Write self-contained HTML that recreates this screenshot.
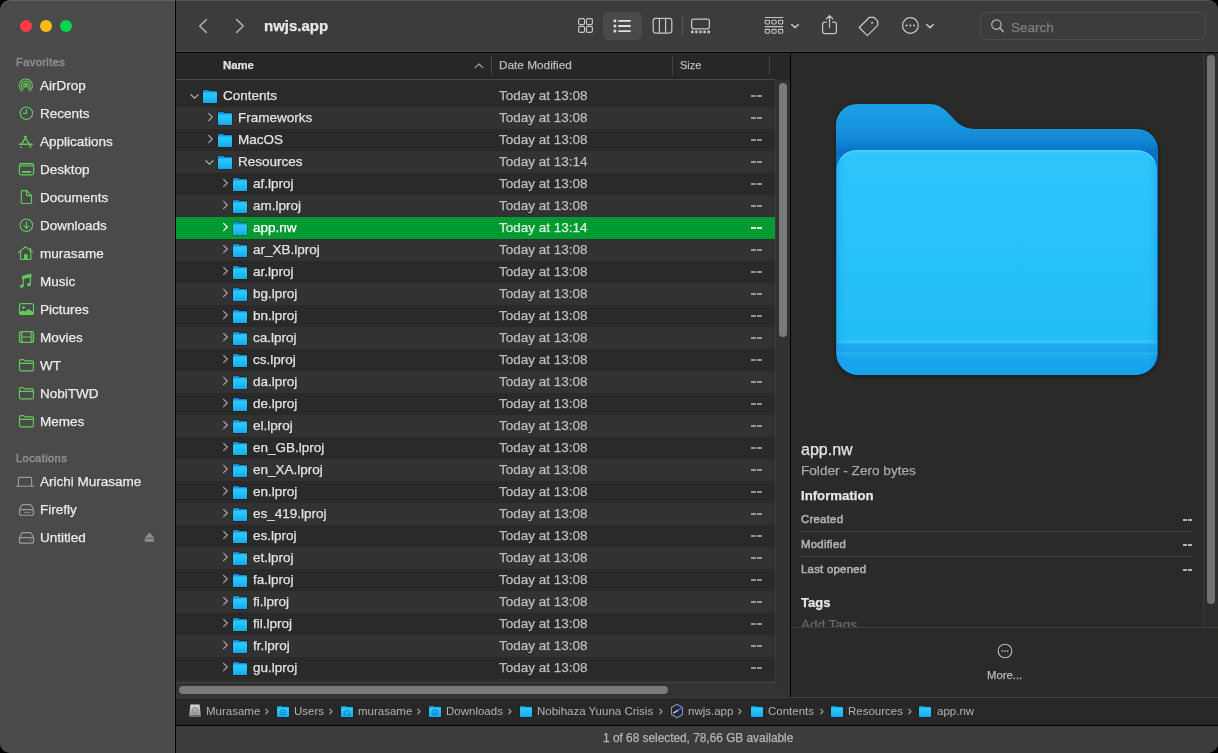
<!DOCTYPE html>
<html><head><meta charset="utf-8">
<style>
*{margin:0;padding:0;box-sizing:border-box}
html,body{width:1218px;height:753px;background:#000;overflow:hidden}
body{font-family:"Liberation Sans",sans-serif;-webkit-font-smoothing:antialiased}
.a{-webkit-text-stroke:0.25px currentColor}
#win{will-change:transform;position:absolute;left:0;top:0;width:1218px;height:753px;border-radius:10px;overflow:hidden;background:#2a2a2a}
.a{position:absolute;white-space:nowrap}
#side{left:0;top:0;width:175px;height:753px;background:#4a4a4a;border-right:1px solid #515151}
#sideb{left:175px;top:0;width:1px;height:753px;background:#000}
#tb{left:176px;top:0;width:1042px;height:52px;background:#3c3c3c;border-bottom:1px solid #434343}
#tbb{left:176px;top:52px;width:1042px;height:1px;background:#000}
#topl{left:0;top:0;width:1218px;height:1px;background:#626262}
.tl{position:absolute;top:20px;width:12px;height:12px;border-radius:6px}
.sh{font-size:11px;letter-spacing:0.45px;color:#8e8e8e;left:16px;-webkit-text-stroke:0.55px currentColor}
.si{font-size:13.5px;color:#ebebeb;left:40px}
.ic{position:absolute}
#hdr{left:176px;top:53px;width:614px;height:26px;background:#272727;border-top:1px solid #2c2c2c}
#hdrl{left:176px;top:79px;width:599px;height:1px;background:#484848}
.hs{position:absolute;top:56px;width:1px;height:19px;background:#444}
.row{position:absolute;left:176px;width:599px;height:22px}
.row .n{position:absolute;font-size:13.5px;color:#e2e2e2;top:3px}
.row .d{position:absolute;left:323px;font-size:13.5px;color:#bcbcbc;top:3px}
.row .z{position:absolute;left:575px;font-size:13.5px;color:#c4c4c4;top:3px}
.ev{background:#2a2a2a}.od{background:#323232}
.sel{background:#009b30}
.sel .n,.sel .d,.sel .z{color:#fff}
.rt{font-size:13.5px}
.pl{left:801px;font-size:11.4px;letter-spacing:0.25px;color:#b0b0b0;-webkit-text-stroke:0.55px currentColor}
.pv{left:1182px;font-size:13px;color:#dcdcdc}
.pt{position:absolute;top:705px;font-size:11.5px;color:#b2b2b2;white-space:nowrap}
</style></head><body>
<svg width="0" height="0" style="position:absolute"><defs><linearGradient id="sfg" x1="0" y1="0" x2="0" y2="1"><stop offset="0" stop-color="#2ecbfd"/><stop offset="0.5" stop-color="#22bdf7"/><stop offset="1" stop-color="#14a8ee"/></linearGradient></defs></svg>
<div id="win">
<div class="a" id="side"></div>
<div class="a" id="sideb"></div>
<div class="a" id="tb"></div>
<div class="a" id="tbb"></div>

<div class="tl" style="left:20px;background:#fd3b47"></div>
<div class="tl" style="left:40px;background:#fdbd14"></div>
<div class="tl" style="left:60px;background:#00d54c"></div>

<!-- sidebar text -->
<div class="a sh" style="top:56px">Favorites</div>
<div class="a si" style="top:78px">AirDrop</div>
<div class="a si" style="top:106px">Recents</div>
<div class="a si" style="top:134px">Applications</div>
<div class="a si" style="top:162px">Desktop</div>
<div class="a si" style="top:190px">Documents</div>
<div class="a si" style="top:218px">Downloads</div>
<div class="a si" style="top:246px">murasame</div>
<div class="a si" style="top:274px">Music</div>
<div class="a si" style="top:302px">Pictures</div>
<div class="a si" style="top:330px">Movies</div>
<div class="a si" style="top:358px">WT</div>
<div class="a si" style="top:386px">NobiTWD</div>
<div class="a si" style="top:414px">Memes</div>
<div class="a sh" style="top:452px">Locations</div>
<div class="a si" style="top:474px">Arichi Murasame</div>
<div class="a si" style="top:502px">Firefly</div>
<div class="a si" style="top:530px">Untitled</div>

<!-- header -->
<div class="a" id="hdr"></div>
<div class="a" id="hdrl"></div>
<div class="a" style="left:223px;top:59px;font-size:11.3px;font-weight:bold;color:#e2e2e2">Name</div>
<div class="a" style="left:499px;top:58px;font-size:11.8px;color:#bababa">Date Modified</div>
<div class="a" style="left:680px;top:59px;font-size:11px;color:#bababa">Size</div>
<svg class="ic" style="left:473px;top:61px" width="12" height="9" viewBox="0 0 12 9"><path d="M2.2 6.6 L6 3 L9.8 6.6" fill="none" stroke="#a4a4a4" stroke-width="1.2" stroke-linecap="round" stroke-linejoin="round"/></svg>
<div class="hs" style="left:491px"></div>
<div class="hs" style="left:672px"></div>
<div class="hs" style="left:769px"></div>


<!-- list borders & scrollbars -->
<div class="a" style="left:775px;top:80px;width:1px;height:603px;background:#3d3d3d"></div>
<div class="a" style="left:776px;top:80px;width:14px;height:603px;background:#323232"></div>
<div class="a" style="left:779px;top:83px;width:8px;height:254px;border-radius:4px;background:#7a7a7a"></div>
<div class="a" style="left:176px;top:679px;width:599px;height:3px;background:#2e2e2e"></div><div class="a" style="left:176px;top:682px;width:600px;height:1px;background:#424242"></div>
<div class="a" style="left:176px;top:683px;width:614px;height:14px;background:#333333"></div>
<div class="a" style="left:179px;top:686px;width:489px;height:8px;border-radius:4px;background:#7a7a7a"></div>
<div class="a" style="left:790px;top:53px;width:1px;height:644px;background:#000"></div>

<!-- preview pane -->
<div class="a" style="left:791px;top:53px;width:427px;height:644px;background:#2a2a28"></div>
<div class="a" style="left:1203px;top:53px;width:1px;height:574px;background:#3a3a3a"></div>
<div class="a" style="left:1204px;top:53px;width:14px;height:574px;background:#2d2d2d"></div>
<div class="a" style="left:1207px;top:55px;width:8px;height:549px;border-radius:4px;background:#717171"></div>
<svg class="ic" style="left:826px;top:94px" width="342" height="292" viewBox="0 0 342 292">
<defs>
<linearGradient id="bk" gradientUnits="userSpaceOnUse" x1="0" y1="10" x2="0" y2="57"><stop offset="0" stop-color="#1c9fe6"/><stop offset="0.45" stop-color="#1896de"/><stop offset="0.8" stop-color="#1186d6"/><stop offset="1" stop-color="#0a70c6"/></linearGradient>
<linearGradient id="fr" gradientUnits="userSpaceOnUse" x1="0" y1="56" x2="0" y2="281">
<stop offset="0" stop-color="#3acbfd"/><stop offset="0.02" stop-color="#2ec5fb"/><stop offset="0.5" stop-color="#28c1f9"/><stop offset="0.84" stop-color="#23bdf7"/>
<stop offset="0.852" stop-color="#36c6fa"/><stop offset="0.866" stop-color="#1faaee"/><stop offset="0.895" stop-color="#1ca6ec"/><stop offset="0.905" stop-color="#26b4f2"/><stop offset="0.918" stop-color="#1aa8ee"/><stop offset="1" stop-color="#16a2ea"/></linearGradient>
<linearGradient id="frs" x1="0" y1="0" x2="1" y2="0"><stop offset="0" stop-color="#0a80c8" stop-opacity="0.2"/><stop offset="0.03" stop-color="#0a80c8" stop-opacity="0"/><stop offset="0.97" stop-color="#0a80c8" stop-opacity="0"/><stop offset="1" stop-color="#0a80c8" stop-opacity="0.2"/></linearGradient>
<filter id="sh" x="-10%" y="-10%" width="120%" height="120%"><feDropShadow dx="0" dy="1" stdDeviation="2.2" flood-color="#000" flood-opacity="0.5"/></filter>
</defs>
<g filter="url(#sh)">
<path d="M10 31 A21 21 0 0 1 31 10 H103 C112 10 118 14 125 22 C132 30 138 35 149 35 H311 A21 21 0 0 1 332 56 V259 A22 22 0 0 1 310 281 H32 A22 22 0 0 1 10 259 Z" fill="url(#bk)"/>
<path d="M10.5 76 A20 20 0 0 1 30.5 56 H311 A20 20 0 0 1 331 76 V259 A22 22 0 0 1 309 281 H32.5 A22 22 0 0 1 10.5 259 Z" fill="url(#fr)"/>
<path d="M10.5 76 A20 20 0 0 1 30.5 56 H311 A20 20 0 0 1 331 76 V259 A22 22 0 0 1 309 281 H32.5 A22 22 0 0 1 10.5 259 Z" fill="url(#frs)"/>
<path d="M14 66 A20 20 0 0 1 30.5 56.6 H311 A20 20 0 0 1 327.5 66" fill="none" stroke="#6ad8ff" stroke-opacity="0.5" stroke-width="1.1"/>
</g>
</svg>
<div class="a" style="left:801px;top:441px;font-size:16px;color:#e4e4e4">app.nw</div>
<div class="a" style="left:801px;top:463px;font-size:13.6px;color:#a9a9a9">Folder - Zero bytes</div>
<div class="a" style="left:801px;top:488px;font-size:13.2px;font-weight:bold;color:#e6e6e6">Information</div>
<div class="a pl" style="top:513px">Created</div>
<div class="a" style="left:1183px;top:519px;width:4px;height:2px;background:rgba(215,215,215,0.8)"></div><div class="a" style="left:1188px;top:519px;width:4px;height:2px;background:rgba(215,215,215,0.8)"></div>
<div class="a" style="left:801px;top:531px;width:391px;height:1px;background:#424242"></div>
<div class="a pl" style="top:538px">Modified</div>
<div class="a" style="left:1183px;top:544px;width:4px;height:2px;background:rgba(215,215,215,0.8)"></div><div class="a" style="left:1188px;top:544px;width:4px;height:2px;background:rgba(215,215,215,0.8)"></div>
<div class="a" style="left:801px;top:556px;width:391px;height:1px;background:#424242"></div>
<div class="a pl" style="top:563px">Last opened</div>
<div class="a" style="left:1183px;top:569px;width:4px;height:2px;background:rgba(215,215,215,0.8)"></div><div class="a" style="left:1188px;top:569px;width:4px;height:2px;background:rgba(215,215,215,0.8)"></div>
<div class="a" style="left:801px;top:595px;font-size:13px;font-weight:bold;color:#e6e6e6">Tags</div>
<div class="a" style="left:791px;top:616px;width:412px;height:11px;overflow:hidden"><div class="a" style="left:10px;top:1px;font-size:13.5px;color:#6a6a6a">Add Tags</div></div>
<div class="a" style="left:791px;top:627px;width:427px;height:1px;background:#3e3e3e"></div>
<svg class="ic" style="left:996px;top:642px" width="18" height="18" viewBox="0 0 18 18"><circle cx="9" cy="9" r="6.8" fill="none" stroke="#bdbdbd" stroke-width="1.1"/><rect x="5.6" y="8.3" width="1.5" height="1.5" fill="#bdbdbd"/><rect x="8.25" y="8.3" width="1.5" height="1.5" fill="#bdbdbd"/><rect x="10.9" y="8.3" width="1.5" height="1.5" fill="#bdbdbd"/></svg>
<div class="a" style="left:987px;top:669px;font-size:11.3px;color:#b9b9b9">More...</div>

<!-- path bar -->
<div class="a" style="left:176px;top:697px;width:1042px;height:1px;background:#3c3c3c"></div>
<div class="a" style="left:176px;top:698px;width:1042px;height:27px;background:#282828"></div>
<div class="a" style="left:176px;top:725px;width:1042px;height:1px;background:#000"></div>
<svg class="ic" style="left:188px;top:703px" width="14" height="15" viewBox="0 0 14 15">
<defs><linearGradient id="dv" x1="0" y1="0" x2="0" y2="1"><stop offset="0" stop-color="#d8dcdf"/><stop offset="1" stop-color="#8a9096"/></linearGradient></defs>
<path d="M2.4 1.5 H11.6 L12.8 12 V13.6 H1.2 V12 Z" fill="url(#dv)"/><rect x="1.2" y="12" width="11.6" height="1.6" fill="#6c7075"/>
<circle cx="7" cy="7.2" r="2.8" fill="none" stroke="#7d8388" stroke-width="0.9"/><circle cx="7" cy="7.2" r="0.8" fill="#7d8388"/></svg>
<div class="pt" style="left:206px">Murasame</div>
<svg class="ic" style="left:264px;top:707px" width="6" height="9" viewBox="0 0 6 9"><path d="M1.8 2.2 L4 4.5 L1.8 6.8" fill="none" stroke="#a0a0a0" stroke-width="1.2" stroke-linecap="round" stroke-linejoin="round"/></svg>
<svg class="ic" style="left:276px;top:705px" width="14" height="13" viewBox="-1 -1 14 13">
<path d="M0 0.9 Q0 0 0.9 0 H4.4 Q4.9 0 5.2 0.4 L5.6 0.8 H11.1 Q12 0.8 12 1.7 V10.1 Q12 11 11.1 11 H0.9 Q0 11 0 10.1 Z" fill="none" stroke="#000" stroke-opacity="0.3" stroke-width="1"/>
<path d="M0 0.9 Q0 0 0.9 0 H4.4 Q4.9 0 5.2 0.4 L5.6 0.8 H11.1 Q12 0.8 12 1.7 V10.1 Q12 11 11.1 11 H0.9 Q0 11 0 10.1 Z" fill="#1690dc"/>
<path d="M0 2.6 Q0 1.6 1 1.6 H11 Q12 1.6 12 2.6 V10.1 Q12 11 11.1 11 H0.9 Q0 11 0 10.1 Z" fill="url(#sfg)"/><g transform="translate(-0.5 -1.2)"><circle cx="6.5" cy="7.6" r="2.6" fill="none" stroke="#0b7ac4" stroke-width="0.9"/><circle cx="5.7" cy="7.6" r="0.6" fill="#0b7ac4"/><circle cx="7.3" cy="7.6" r="0.6" fill="#0b7ac4"/></g></svg>
<div class="pt" style="left:294px">Users</div>
<svg class="ic" style="left:328px;top:707px" width="6" height="9" viewBox="0 0 6 9"><path d="M1.8 2.2 L4 4.5 L1.8 6.8" fill="none" stroke="#a0a0a0" stroke-width="1.2" stroke-linecap="round" stroke-linejoin="round"/></svg>
<svg class="ic" style="left:340px;top:705px" width="14" height="13" viewBox="-1 -1 14 13">
<path d="M0 0.9 Q0 0 0.9 0 H4.4 Q4.9 0 5.2 0.4 L5.6 0.8 H11.1 Q12 0.8 12 1.7 V10.1 Q12 11 11.1 11 H0.9 Q0 11 0 10.1 Z" fill="none" stroke="#000" stroke-opacity="0.3" stroke-width="1"/>
<path d="M0 0.9 Q0 0 0.9 0 H4.4 Q4.9 0 5.2 0.4 L5.6 0.8 H11.1 Q12 0.8 12 1.7 V10.1 Q12 11 11.1 11 H0.9 Q0 11 0 10.1 Z" fill="#1690dc"/>
<path d="M0 2.6 Q0 1.6 1 1.6 H11 Q12 1.6 12 2.6 V10.1 Q12 11 11.1 11 H0.9 Q0 11 0 10.1 Z" fill="url(#sfg)"/><g transform="translate(-0.5 -1.2)"><path d="M6.5 5.2 L9.3 7.6 V10.2 H3.7 V7.6 Z" fill="none" stroke="#0b7ac4" stroke-width="0.9"/></g></svg>
<div class="pt" style="left:358px">murasame</div>
<svg class="ic" style="left:416px;top:707px" width="6" height="9" viewBox="0 0 6 9"><path d="M1.8 2.2 L4 4.5 L1.8 6.8" fill="none" stroke="#a0a0a0" stroke-width="1.2" stroke-linecap="round" stroke-linejoin="round"/></svg>
<svg class="ic" style="left:428px;top:705px" width="14" height="13" viewBox="-1 -1 14 13">
<path d="M0 0.9 Q0 0 0.9 0 H4.4 Q4.9 0 5.2 0.4 L5.6 0.8 H11.1 Q12 0.8 12 1.7 V10.1 Q12 11 11.1 11 H0.9 Q0 11 0 10.1 Z" fill="none" stroke="#000" stroke-opacity="0.3" stroke-width="1"/>
<path d="M0 0.9 Q0 0 0.9 0 H4.4 Q4.9 0 5.2 0.4 L5.6 0.8 H11.1 Q12 0.8 12 1.7 V10.1 Q12 11 11.1 11 H0.9 Q0 11 0 10.1 Z" fill="#1690dc"/>
<path d="M0 2.6 Q0 1.6 1 1.6 H11 Q12 1.6 12 2.6 V10.1 Q12 11 11.1 11 H0.9 Q0 11 0 10.1 Z" fill="url(#sfg)"/><g transform="translate(-0.5 -1.2)"><circle cx="6.5" cy="7.6" r="2.9" fill="none" stroke="#0b7ac4" stroke-width="0.9"/><path d="M6.5 5.8 V9.2 M5.2 8 L6.5 9.2 L7.8 8" fill="none" stroke="#0b7ac4" stroke-width="0.8"/></g></svg>
<div class="pt" style="left:446px">Downloads</div>
<svg class="ic" style="left:507px;top:707px" width="6" height="9" viewBox="0 0 6 9"><path d="M1.8 2.2 L4 4.5 L1.8 6.8" fill="none" stroke="#a0a0a0" stroke-width="1.2" stroke-linecap="round" stroke-linejoin="round"/></svg>
<svg class="ic" style="left:519px;top:705px" width="14" height="13" viewBox="-1 -1 14 13">
<path d="M0 0.9 Q0 0 0.9 0 H4.4 Q4.9 0 5.2 0.4 L5.6 0.8 H11.1 Q12 0.8 12 1.7 V10.1 Q12 11 11.1 11 H0.9 Q0 11 0 10.1 Z" fill="none" stroke="#000" stroke-opacity="0.3" stroke-width="1"/>
<path d="M0 0.9 Q0 0 0.9 0 H4.4 Q4.9 0 5.2 0.4 L5.6 0.8 H11.1 Q12 0.8 12 1.7 V10.1 Q12 11 11.1 11 H0.9 Q0 11 0 10.1 Z" fill="#1690dc"/>
<path d="M0 2.6 Q0 1.6 1 1.6 H11 Q12 1.6 12 2.6 V10.1 Q12 11 11.1 11 H0.9 Q0 11 0 10.1 Z" fill="url(#sfg)"/><g transform="translate(-0.5 -1.2)"></g></svg>
<div class="pt" style="left:537px">Nobihaza Yuuna Crisis</div>
<svg class="ic" style="left:658px;top:707px" width="6" height="9" viewBox="0 0 6 9"><path d="M1.8 2.2 L4 4.5 L1.8 6.8" fill="none" stroke="#a0a0a0" stroke-width="1.2" stroke-linecap="round" stroke-linejoin="round"/></svg>
<svg class="ic" style="left:670px;top:703px" width="15" height="16" viewBox="0 0 15 16">
<path d="M7 1.3 L12.5 4.4 V11.6 L7 14.7 L1.5 11.6 V4.4 Z" fill="#1f2538" stroke="#8d8f9c" stroke-width="1.1" stroke-linejoin="round"/>
<path d="M11.2 5.3 L7.1 7.9" stroke="#3f52ff" stroke-width="1.9" stroke-linecap="round"/><path d="M7.1 7.9 L3.8 9.9" stroke="#c8c8c8" stroke-width="1.5" stroke-linecap="round"/></svg>
<div class="pt" style="left:688px">nwjs.app</div>
<svg class="ic" style="left:737px;top:707px" width="6" height="9" viewBox="0 0 6 9"><path d="M1.8 2.2 L4 4.5 L1.8 6.8" fill="none" stroke="#a0a0a0" stroke-width="1.2" stroke-linecap="round" stroke-linejoin="round"/></svg>
<svg class="ic" style="left:750px;top:705px" width="14" height="13" viewBox="-1 -1 14 13">
<path d="M0 0.9 Q0 0 0.9 0 H4.4 Q4.9 0 5.2 0.4 L5.6 0.8 H11.1 Q12 0.8 12 1.7 V10.1 Q12 11 11.1 11 H0.9 Q0 11 0 10.1 Z" fill="none" stroke="#000" stroke-opacity="0.3" stroke-width="1"/>
<path d="M0 0.9 Q0 0 0.9 0 H4.4 Q4.9 0 5.2 0.4 L5.6 0.8 H11.1 Q12 0.8 12 1.7 V10.1 Q12 11 11.1 11 H0.9 Q0 11 0 10.1 Z" fill="#1690dc"/>
<path d="M0 2.6 Q0 1.6 1 1.6 H11 Q12 1.6 12 2.6 V10.1 Q12 11 11.1 11 H0.9 Q0 11 0 10.1 Z" fill="url(#sfg)"/><g transform="translate(-0.5 -1.2)"></g></svg>
<div class="pt" style="left:768px">Contents</div>
<svg class="ic" style="left:819px;top:707px" width="6" height="9" viewBox="0 0 6 9"><path d="M1.8 2.2 L4 4.5 L1.8 6.8" fill="none" stroke="#a0a0a0" stroke-width="1.2" stroke-linecap="round" stroke-linejoin="round"/></svg>
<svg class="ic" style="left:830px;top:705px" width="14" height="13" viewBox="-1 -1 14 13">
<path d="M0 0.9 Q0 0 0.9 0 H4.4 Q4.9 0 5.2 0.4 L5.6 0.8 H11.1 Q12 0.8 12 1.7 V10.1 Q12 11 11.1 11 H0.9 Q0 11 0 10.1 Z" fill="none" stroke="#000" stroke-opacity="0.3" stroke-width="1"/>
<path d="M0 0.9 Q0 0 0.9 0 H4.4 Q4.9 0 5.2 0.4 L5.6 0.8 H11.1 Q12 0.8 12 1.7 V10.1 Q12 11 11.1 11 H0.9 Q0 11 0 10.1 Z" fill="#1690dc"/>
<path d="M0 2.6 Q0 1.6 1 1.6 H11 Q12 1.6 12 2.6 V10.1 Q12 11 11.1 11 H0.9 Q0 11 0 10.1 Z" fill="url(#sfg)"/><g transform="translate(-0.5 -1.2)"></g></svg>
<div class="pt" style="left:848px">Resources</div>
<svg class="ic" style="left:907px;top:707px" width="6" height="9" viewBox="0 0 6 9"><path d="M1.8 2.2 L4 4.5 L1.8 6.8" fill="none" stroke="#a0a0a0" stroke-width="1.2" stroke-linecap="round" stroke-linejoin="round"/></svg>
<svg class="ic" style="left:918px;top:705px" width="14" height="13" viewBox="-1 -1 14 13">
<path d="M0 0.9 Q0 0 0.9 0 H4.4 Q4.9 0 5.2 0.4 L5.6 0.8 H11.1 Q12 0.8 12 1.7 V10.1 Q12 11 11.1 11 H0.9 Q0 11 0 10.1 Z" fill="none" stroke="#000" stroke-opacity="0.3" stroke-width="1"/>
<path d="M0 0.9 Q0 0 0.9 0 H4.4 Q4.9 0 5.2 0.4 L5.6 0.8 H11.1 Q12 0.8 12 1.7 V10.1 Q12 11 11.1 11 H0.9 Q0 11 0 10.1 Z" fill="#1690dc"/>
<path d="M0 2.6 Q0 1.6 1 1.6 H11 Q12 1.6 12 2.6 V10.1 Q12 11 11.1 11 H0.9 Q0 11 0 10.1 Z" fill="url(#sfg)"/><g transform="translate(-0.5 -1.2)"></g></svg>
<div class="pt" style="left:937px">app.nw</div>

<!-- status bar -->
<div class="a" style="left:176px;top:726px;width:1042px;height:27px;background:#3c3c3c"></div>
<div class="a" style="left:603px;top:731px;font-size:11.85px;color:#b4b4b4">1 of 68 selected, 78,66 GB available</div>

<!-- toolbar -->
<svg class="ic" style="left:196px;top:17px" width="14" height="18" viewBox="0 0 14 18"><path d="M10.3 2.6 L3.7 9 L10.3 15.4" fill="none" stroke="#ababab" stroke-width="1.55" stroke-linecap="round" stroke-linejoin="round"/></svg>
<svg class="ic" style="left:233px;top:17px" width="14" height="18" viewBox="0 0 14 18"><path d="M3.7 2.6 L10.3 9 L3.7 15.4" fill="none" stroke="#ababab" stroke-width="1.55" stroke-linecap="round" stroke-linejoin="round"/></svg>
<div class="a" style="left:264px;top:17px;font-size:15px;font-weight:bold;color:#e8e8e8">nwjs.app</div>
<svg class="ic" style="left:576px;top:16px" width="19" height="19" viewBox="0 0 19 19"><g fill="none" stroke="#c4c4c4" stroke-width="1.2">
<rect x="2.6" y="2.6" width="6" height="6" rx="1.6"/><rect x="10.4" y="2.6" width="6" height="6" rx="1.6"/><rect x="2.6" y="10.4" width="6" height="6" rx="1.6"/><rect x="10.4" y="10.4" width="6" height="6" rx="1.6"/></g></svg>
<div class="a" style="left:603px;top:12px;width:39px;height:28px;border-radius:6px;background:#4a4a4a"></div>
<svg class="ic" style="left:612px;top:17px" width="20" height="17" viewBox="0 0 20 17"><g fill="#e0e0e0">
<rect x="1.6" y="2.6" width="2.6" height="2.6"/><rect x="1.6" y="7.7" width="2.6" height="2.6"/><rect x="1.6" y="12.8" width="2.6" height="2.6"/></g>
<g stroke="#e0e0e0" stroke-width="1.9" stroke-linecap="round"><path d="M7 3.9 H18"/><path d="M7 9 H18"/><path d="M7 14.1 H18"/></g></svg>
<svg class="ic" style="left:651px;top:16px" width="23" height="19" viewBox="0 0 23 19"><g fill="none" stroke="#c4c4c4" stroke-width="1.25">
<rect x="2.2" y="2.4" width="18.6" height="14.6" rx="2.4"/><path d="M8.4 2.4 V17 M14.6 2.4 V17"/></g></svg>
<div class="a" style="left:682px;top:16px;width:1px;height:20px;background:#555"></div>
<svg class="ic" style="left:690px;top:17px" width="21" height="18" viewBox="0 0 21 18"><g fill="none" stroke="#c4c4c4" stroke-width="1.25">
<rect x="1.6" y="2.2" width="17.8" height="9.6" rx="2"/></g><g fill="#c4c4c4">
<rect x="1" y="13.4" width="2.6" height="2.8" rx="0.5"/><rect x="5.1" y="13.4" width="2.6" height="2.8" rx="0.5"/><rect x="9.2" y="13.4" width="2.6" height="2.8" rx="0.5"/><rect x="13.3" y="13.4" width="2.6" height="2.8" rx="0.5"/><rect x="17.4" y="13.4" width="2.6" height="2.8" rx="0.5"/></g></svg>
<svg class="ic" style="left:763px;top:15px" width="22" height="20" viewBox="0 0 22 20"><g fill="none" stroke="#c4c4c4" stroke-width="1.1">
<path d="M1.8 2.45 H20.2 M1.8 11.6 H20.2"/>
<rect x="2.2" y="5.2" width="4.3" height="3.8" rx="0.9"/><rect x="8.85" y="5.2" width="4.3" height="3.8" rx="0.9"/><rect x="15.5" y="5.2" width="4.3" height="3.8" rx="0.9"/>
<rect x="2.2" y="14.4" width="4.3" height="3.8" rx="0.9"/><rect x="8.85" y="14.4" width="4.3" height="3.8" rx="0.9"/><rect x="15.5" y="14.4" width="4.3" height="3.8" rx="0.9"/></g></svg>
<svg class="ic" style="left:789px;top:21px" width="12" height="9" viewBox="0 0 12 9"><path d="M2.7 3.5 L6 6.6 L9.3 3.5" fill="none" stroke="#c4c4c4" stroke-width="1.55" stroke-linecap="round" stroke-linejoin="round"/></svg>
<svg class="ic" style="left:820px;top:14px" width="19" height="21" viewBox="0 0 19 21"><g fill="none" stroke="#c4c4c4" stroke-width="1.25" stroke-linecap="round" stroke-linejoin="round">
<path d="M6.4 8 H4.6 Q2.6 8 2.6 10 V17.6 Q2.6 19.5 4.6 19.5 H14.4 Q16.4 19.5 16.4 17.6 V10 Q16.4 8 14.4 8 H12.6"/>
<path d="M9.5 13.2 V1.8 M6.3 4.8 L9.5 1.6 L12.7 4.8"/></g></svg>
<svg class="ic" style="left:858px;top:16px" width="22" height="21" viewBox="0 0 22 21"><g fill="none" stroke="#c4c4c4" stroke-width="1.3" stroke-linejoin="round">
<path d="M11.4 1.3 H15.9 L19.7 5.1 V9.4 L9.4 19.6 L1.3 11.5 Z"/></g>
<circle cx="14.1" cy="6.8" r="1.05" fill="#c4c4c4"/></svg>
<svg class="ic" style="left:900px;top:16px" width="20" height="20" viewBox="0 0 20 20"><circle cx="10.4" cy="9.5" r="7.85" fill="none" stroke="#c4c4c4" stroke-width="1.25"/>
<g fill="#c4c4c4"><circle cx="6.6" cy="9.5" r="1.05"/><circle cx="10.35" cy="9.5" r="1.05"/><circle cx="14.1" cy="9.5" r="1.05"/></g></svg>
<svg class="ic" style="left:924px;top:21px" width="12" height="9" viewBox="0 0 12 9"><path d="M2.7 3.5 L6 6.6 L9.3 3.5" fill="none" stroke="#c4c4c4" stroke-width="1.55" stroke-linecap="round" stroke-linejoin="round"/></svg>
<div class="a" style="left:980px;top:12px;width:226px;height:28px;border-radius:6px;border:1px solid #4c4c4c;background:#3c3c3c"></div>
<svg class="ic" style="left:989px;top:17px" width="17" height="17" viewBox="0 0 17 17"><circle cx="7.4" cy="7.6" r="4.7" fill="none" stroke="#b4b4b4" stroke-width="1.2"/><path d="M10.8 11 L14.2 14.6" stroke="#b4b4b4" stroke-width="1.5" stroke-linecap="round"/></svg>
<div class="a" style="left:1011px;top:20px;font-size:13.5px;color:#7e7e7e">Search</div>

<div class="row ev" style="top:85px"></div>
<svg class="ic" style="left:189px;top:93px" width="11" height="7" viewBox="0 0 11 7"><path d="M1.9 1.7 L5.5 5.2 L9.1 1.7" fill="none" stroke="#a8a8a8" stroke-width="1.2" stroke-linecap="round" stroke-linejoin="round"/></svg>
<svg class="ic" style="left:202px;top:89px" width="16" height="16" viewBox="-1 -1 16 16">
<path d="M0 1 Q0 0 1 0 H5 Q5.6 0 6 0.5 L6.4 0.9 H13 Q14 0.9 14 1.9 V12 Q14 13 13 13 H1 Q0 13 0 12 Z" fill="none" stroke="#000" stroke-opacity="0.35" stroke-width="1.2"/>
<path d="M0 1 Q0 0 1 0 H5 Q5.6 0 6 0.5 L6.4 0.9 H13 Q14 0.9 14 1.9 V12 Q14 13 13 13 H1 Q0 13 0 12 Z" fill="#1690dc"/>
<path d="M0 3.4 Q0 2.5 0.9 2.5 H13.1 Q14 2.5 14 3.4 V12 Q14 13 13 13 H1 Q0 13 0 12 Z" fill="url(#sfg)"/>
</svg>
<div class="a rt" style="left:223px;top:88px;color:#e2e2e2">Contents</div>
<div class="a rt" style="left:499px;top:88px;color:#bdbdbd">Today at 13:08</div>
<div class="a" style="left:751px;top:95px;width:5px;height:2px;background:rgba(190,190,190,0.72)"></div><div class="a" style="left:757px;top:95px;width:5px;height:2px;background:rgba(190,190,190,0.72)"></div>
<div class="row od" style="top:107px"></div>
<svg class="ic" style="left:207px;top:112px" width="7" height="10" viewBox="0 0 7 10"><path d="M1.6 1.4 L5.3 5 L1.6 8.6" fill="none" stroke="#a8a8a8" stroke-width="1.15" stroke-linecap="round" stroke-linejoin="round"/></svg>
<svg class="ic" style="left:217px;top:111px" width="16" height="16" viewBox="-1 -1 16 16">
<path d="M0 1 Q0 0 1 0 H5 Q5.6 0 6 0.5 L6.4 0.9 H13 Q14 0.9 14 1.9 V12 Q14 13 13 13 H1 Q0 13 0 12 Z" fill="none" stroke="#000" stroke-opacity="0.35" stroke-width="1.2"/>
<path d="M0 1 Q0 0 1 0 H5 Q5.6 0 6 0.5 L6.4 0.9 H13 Q14 0.9 14 1.9 V12 Q14 13 13 13 H1 Q0 13 0 12 Z" fill="#1690dc"/>
<path d="M0 3.4 Q0 2.5 0.9 2.5 H13.1 Q14 2.5 14 3.4 V12 Q14 13 13 13 H1 Q0 13 0 12 Z" fill="url(#sfg)"/>
</svg>
<div class="a rt" style="left:238px;top:110px;color:#e2e2e2">Frameworks</div>
<div class="a rt" style="left:499px;top:110px;color:#bdbdbd">Today at 13:08</div>
<div class="a" style="left:751px;top:117px;width:5px;height:2px;background:rgba(190,190,190,0.72)"></div><div class="a" style="left:757px;top:117px;width:5px;height:2px;background:rgba(190,190,190,0.72)"></div>
<div class="row ev" style="top:129px"></div>
<svg class="ic" style="left:207px;top:134px" width="7" height="10" viewBox="0 0 7 10"><path d="M1.6 1.4 L5.3 5 L1.6 8.6" fill="none" stroke="#a8a8a8" stroke-width="1.15" stroke-linecap="round" stroke-linejoin="round"/></svg>
<svg class="ic" style="left:217px;top:133px" width="16" height="16" viewBox="-1 -1 16 16">
<path d="M0 1 Q0 0 1 0 H5 Q5.6 0 6 0.5 L6.4 0.9 H13 Q14 0.9 14 1.9 V12 Q14 13 13 13 H1 Q0 13 0 12 Z" fill="none" stroke="#000" stroke-opacity="0.35" stroke-width="1.2"/>
<path d="M0 1 Q0 0 1 0 H5 Q5.6 0 6 0.5 L6.4 0.9 H13 Q14 0.9 14 1.9 V12 Q14 13 13 13 H1 Q0 13 0 12 Z" fill="#1690dc"/>
<path d="M0 3.4 Q0 2.5 0.9 2.5 H13.1 Q14 2.5 14 3.4 V12 Q14 13 13 13 H1 Q0 13 0 12 Z" fill="url(#sfg)"/>
</svg>
<div class="a rt" style="left:238px;top:132px;color:#e2e2e2">MacOS</div>
<div class="a rt" style="left:499px;top:132px;color:#bdbdbd">Today at 13:08</div>
<div class="a" style="left:751px;top:139px;width:5px;height:2px;background:rgba(190,190,190,0.72)"></div><div class="a" style="left:757px;top:139px;width:5px;height:2px;background:rgba(190,190,190,0.72)"></div>
<div class="row od" style="top:151px"></div>
<svg class="ic" style="left:204px;top:159px" width="11" height="7" viewBox="0 0 11 7"><path d="M1.9 1.7 L5.5 5.2 L9.1 1.7" fill="none" stroke="#a8a8a8" stroke-width="1.2" stroke-linecap="round" stroke-linejoin="round"/></svg>
<svg class="ic" style="left:217px;top:155px" width="16" height="16" viewBox="-1 -1 16 16">
<path d="M0 1 Q0 0 1 0 H5 Q5.6 0 6 0.5 L6.4 0.9 H13 Q14 0.9 14 1.9 V12 Q14 13 13 13 H1 Q0 13 0 12 Z" fill="none" stroke="#000" stroke-opacity="0.35" stroke-width="1.2"/>
<path d="M0 1 Q0 0 1 0 H5 Q5.6 0 6 0.5 L6.4 0.9 H13 Q14 0.9 14 1.9 V12 Q14 13 13 13 H1 Q0 13 0 12 Z" fill="#1690dc"/>
<path d="M0 3.4 Q0 2.5 0.9 2.5 H13.1 Q14 2.5 14 3.4 V12 Q14 13 13 13 H1 Q0 13 0 12 Z" fill="url(#sfg)"/>
</svg>
<div class="a rt" style="left:238px;top:154px;color:#e2e2e2">Resources</div>
<div class="a rt" style="left:499px;top:154px;color:#bdbdbd">Today at 13:14</div>
<div class="a" style="left:751px;top:161px;width:5px;height:2px;background:rgba(190,190,190,0.72)"></div><div class="a" style="left:757px;top:161px;width:5px;height:2px;background:rgba(190,190,190,0.72)"></div>
<div class="row ev" style="top:173px"></div>
<svg class="ic" style="left:222px;top:178px" width="7" height="10" viewBox="0 0 7 10"><path d="M1.6 1.4 L5.3 5 L1.6 8.6" fill="none" stroke="#a8a8a8" stroke-width="1.15" stroke-linecap="round" stroke-linejoin="round"/></svg>
<svg class="ic" style="left:232px;top:177px" width="16" height="16" viewBox="-1 -1 16 16">
<path d="M0 1 Q0 0 1 0 H5 Q5.6 0 6 0.5 L6.4 0.9 H13 Q14 0.9 14 1.9 V12 Q14 13 13 13 H1 Q0 13 0 12 Z" fill="none" stroke="#000" stroke-opacity="0.35" stroke-width="1.2"/>
<path d="M0 1 Q0 0 1 0 H5 Q5.6 0 6 0.5 L6.4 0.9 H13 Q14 0.9 14 1.9 V12 Q14 13 13 13 H1 Q0 13 0 12 Z" fill="#1690dc"/>
<path d="M0 3.4 Q0 2.5 0.9 2.5 H13.1 Q14 2.5 14 3.4 V12 Q14 13 13 13 H1 Q0 13 0 12 Z" fill="url(#sfg)"/>
</svg>
<div class="a rt" style="left:253px;top:176px;color:#e2e2e2">af.lproj</div>
<div class="a rt" style="left:499px;top:176px;color:#bdbdbd">Today at 13:08</div>
<div class="a" style="left:751px;top:183px;width:5px;height:2px;background:rgba(190,190,190,0.72)"></div><div class="a" style="left:757px;top:183px;width:5px;height:2px;background:rgba(190,190,190,0.72)"></div>
<div class="row od" style="top:195px"></div>
<svg class="ic" style="left:222px;top:200px" width="7" height="10" viewBox="0 0 7 10"><path d="M1.6 1.4 L5.3 5 L1.6 8.6" fill="none" stroke="#a8a8a8" stroke-width="1.15" stroke-linecap="round" stroke-linejoin="round"/></svg>
<svg class="ic" style="left:232px;top:199px" width="16" height="16" viewBox="-1 -1 16 16">
<path d="M0 1 Q0 0 1 0 H5 Q5.6 0 6 0.5 L6.4 0.9 H13 Q14 0.9 14 1.9 V12 Q14 13 13 13 H1 Q0 13 0 12 Z" fill="none" stroke="#000" stroke-opacity="0.35" stroke-width="1.2"/>
<path d="M0 1 Q0 0 1 0 H5 Q5.6 0 6 0.5 L6.4 0.9 H13 Q14 0.9 14 1.9 V12 Q14 13 13 13 H1 Q0 13 0 12 Z" fill="#1690dc"/>
<path d="M0 3.4 Q0 2.5 0.9 2.5 H13.1 Q14 2.5 14 3.4 V12 Q14 13 13 13 H1 Q0 13 0 12 Z" fill="url(#sfg)"/>
</svg>
<div class="a rt" style="left:253px;top:198px;color:#e2e2e2">am.lproj</div>
<div class="a rt" style="left:499px;top:198px;color:#bdbdbd">Today at 13:08</div>
<div class="a" style="left:751px;top:205px;width:5px;height:2px;background:rgba(190,190,190,0.72)"></div><div class="a" style="left:757px;top:205px;width:5px;height:2px;background:rgba(190,190,190,0.72)"></div>
<div class="row sel" style="top:217px"></div>
<svg class="ic" style="left:222px;top:222px" width="7" height="10" viewBox="0 0 7 10"><path d="M1.6 1.4 L5.3 5 L1.6 8.6" fill="none" stroke="#ffffff" stroke-width="1.15" stroke-linecap="round" stroke-linejoin="round"/></svg>
<svg class="ic" style="left:232px;top:221px" width="16" height="16" viewBox="-1 -1 16 16">
<path d="M0 1 Q0 0 1 0 H5 Q5.6 0 6 0.5 L6.4 0.9 H13 Q14 0.9 14 1.9 V12 Q14 13 13 13 H1 Q0 13 0 12 Z" fill="none" stroke="#000" stroke-opacity="0.35" stroke-width="1.2"/>
<path d="M0 1 Q0 0 1 0 H5 Q5.6 0 6 0.5 L6.4 0.9 H13 Q14 0.9 14 1.9 V12 Q14 13 13 13 H1 Q0 13 0 12 Z" fill="#1690dc"/>
<path d="M0 3.4 Q0 2.5 0.9 2.5 H13.1 Q14 2.5 14 3.4 V12 Q14 13 13 13 H1 Q0 13 0 12 Z" fill="url(#sfg)"/>
</svg>
<div class="a rt" style="left:253px;top:220px;color:#ffffff">app.nw</div>
<div class="a rt" style="left:499px;top:220px;color:rgba(255,255,255,0.82)">Today at 13:14</div>
<div class="a" style="left:751px;top:227px;width:5px;height:2px;background:rgba(255,255,255,0.85)"></div><div class="a" style="left:757px;top:227px;width:5px;height:2px;background:rgba(255,255,255,0.85)"></div>
<div class="row od" style="top:239px"></div>
<svg class="ic" style="left:222px;top:244px" width="7" height="10" viewBox="0 0 7 10"><path d="M1.6 1.4 L5.3 5 L1.6 8.6" fill="none" stroke="#a8a8a8" stroke-width="1.15" stroke-linecap="round" stroke-linejoin="round"/></svg>
<svg class="ic" style="left:232px;top:243px" width="16" height="16" viewBox="-1 -1 16 16">
<path d="M0 1 Q0 0 1 0 H5 Q5.6 0 6 0.5 L6.4 0.9 H13 Q14 0.9 14 1.9 V12 Q14 13 13 13 H1 Q0 13 0 12 Z" fill="none" stroke="#000" stroke-opacity="0.35" stroke-width="1.2"/>
<path d="M0 1 Q0 0 1 0 H5 Q5.6 0 6 0.5 L6.4 0.9 H13 Q14 0.9 14 1.9 V12 Q14 13 13 13 H1 Q0 13 0 12 Z" fill="#1690dc"/>
<path d="M0 3.4 Q0 2.5 0.9 2.5 H13.1 Q14 2.5 14 3.4 V12 Q14 13 13 13 H1 Q0 13 0 12 Z" fill="url(#sfg)"/>
</svg>
<div class="a rt" style="left:253px;top:242px;color:#e2e2e2">ar_XB.lproj</div>
<div class="a rt" style="left:499px;top:242px;color:#bdbdbd">Today at 13:08</div>
<div class="a" style="left:751px;top:249px;width:5px;height:2px;background:rgba(190,190,190,0.72)"></div><div class="a" style="left:757px;top:249px;width:5px;height:2px;background:rgba(190,190,190,0.72)"></div>
<div class="row ev" style="top:261px"></div>
<svg class="ic" style="left:222px;top:266px" width="7" height="10" viewBox="0 0 7 10"><path d="M1.6 1.4 L5.3 5 L1.6 8.6" fill="none" stroke="#a8a8a8" stroke-width="1.15" stroke-linecap="round" stroke-linejoin="round"/></svg>
<svg class="ic" style="left:232px;top:265px" width="16" height="16" viewBox="-1 -1 16 16">
<path d="M0 1 Q0 0 1 0 H5 Q5.6 0 6 0.5 L6.4 0.9 H13 Q14 0.9 14 1.9 V12 Q14 13 13 13 H1 Q0 13 0 12 Z" fill="none" stroke="#000" stroke-opacity="0.35" stroke-width="1.2"/>
<path d="M0 1 Q0 0 1 0 H5 Q5.6 0 6 0.5 L6.4 0.9 H13 Q14 0.9 14 1.9 V12 Q14 13 13 13 H1 Q0 13 0 12 Z" fill="#1690dc"/>
<path d="M0 3.4 Q0 2.5 0.9 2.5 H13.1 Q14 2.5 14 3.4 V12 Q14 13 13 13 H1 Q0 13 0 12 Z" fill="url(#sfg)"/>
</svg>
<div class="a rt" style="left:253px;top:264px;color:#e2e2e2">ar.lproj</div>
<div class="a rt" style="left:499px;top:264px;color:#bdbdbd">Today at 13:08</div>
<div class="a" style="left:751px;top:271px;width:5px;height:2px;background:rgba(190,190,190,0.72)"></div><div class="a" style="left:757px;top:271px;width:5px;height:2px;background:rgba(190,190,190,0.72)"></div>
<div class="row od" style="top:283px"></div>
<svg class="ic" style="left:222px;top:288px" width="7" height="10" viewBox="0 0 7 10"><path d="M1.6 1.4 L5.3 5 L1.6 8.6" fill="none" stroke="#a8a8a8" stroke-width="1.15" stroke-linecap="round" stroke-linejoin="round"/></svg>
<svg class="ic" style="left:232px;top:287px" width="16" height="16" viewBox="-1 -1 16 16">
<path d="M0 1 Q0 0 1 0 H5 Q5.6 0 6 0.5 L6.4 0.9 H13 Q14 0.9 14 1.9 V12 Q14 13 13 13 H1 Q0 13 0 12 Z" fill="none" stroke="#000" stroke-opacity="0.35" stroke-width="1.2"/>
<path d="M0 1 Q0 0 1 0 H5 Q5.6 0 6 0.5 L6.4 0.9 H13 Q14 0.9 14 1.9 V12 Q14 13 13 13 H1 Q0 13 0 12 Z" fill="#1690dc"/>
<path d="M0 3.4 Q0 2.5 0.9 2.5 H13.1 Q14 2.5 14 3.4 V12 Q14 13 13 13 H1 Q0 13 0 12 Z" fill="url(#sfg)"/>
</svg>
<div class="a rt" style="left:253px;top:286px;color:#e2e2e2">bg.lproj</div>
<div class="a rt" style="left:499px;top:286px;color:#bdbdbd">Today at 13:08</div>
<div class="a" style="left:751px;top:293px;width:5px;height:2px;background:rgba(190,190,190,0.72)"></div><div class="a" style="left:757px;top:293px;width:5px;height:2px;background:rgba(190,190,190,0.72)"></div>
<div class="row ev" style="top:305px"></div>
<svg class="ic" style="left:222px;top:310px" width="7" height="10" viewBox="0 0 7 10"><path d="M1.6 1.4 L5.3 5 L1.6 8.6" fill="none" stroke="#a8a8a8" stroke-width="1.15" stroke-linecap="round" stroke-linejoin="round"/></svg>
<svg class="ic" style="left:232px;top:309px" width="16" height="16" viewBox="-1 -1 16 16">
<path d="M0 1 Q0 0 1 0 H5 Q5.6 0 6 0.5 L6.4 0.9 H13 Q14 0.9 14 1.9 V12 Q14 13 13 13 H1 Q0 13 0 12 Z" fill="none" stroke="#000" stroke-opacity="0.35" stroke-width="1.2"/>
<path d="M0 1 Q0 0 1 0 H5 Q5.6 0 6 0.5 L6.4 0.9 H13 Q14 0.9 14 1.9 V12 Q14 13 13 13 H1 Q0 13 0 12 Z" fill="#1690dc"/>
<path d="M0 3.4 Q0 2.5 0.9 2.5 H13.1 Q14 2.5 14 3.4 V12 Q14 13 13 13 H1 Q0 13 0 12 Z" fill="url(#sfg)"/>
</svg>
<div class="a rt" style="left:253px;top:308px;color:#e2e2e2">bn.lproj</div>
<div class="a rt" style="left:499px;top:308px;color:#bdbdbd">Today at 13:08</div>
<div class="a" style="left:751px;top:315px;width:5px;height:2px;background:rgba(190,190,190,0.72)"></div><div class="a" style="left:757px;top:315px;width:5px;height:2px;background:rgba(190,190,190,0.72)"></div>
<div class="row od" style="top:327px"></div>
<svg class="ic" style="left:222px;top:332px" width="7" height="10" viewBox="0 0 7 10"><path d="M1.6 1.4 L5.3 5 L1.6 8.6" fill="none" stroke="#a8a8a8" stroke-width="1.15" stroke-linecap="round" stroke-linejoin="round"/></svg>
<svg class="ic" style="left:232px;top:331px" width="16" height="16" viewBox="-1 -1 16 16">
<path d="M0 1 Q0 0 1 0 H5 Q5.6 0 6 0.5 L6.4 0.9 H13 Q14 0.9 14 1.9 V12 Q14 13 13 13 H1 Q0 13 0 12 Z" fill="none" stroke="#000" stroke-opacity="0.35" stroke-width="1.2"/>
<path d="M0 1 Q0 0 1 0 H5 Q5.6 0 6 0.5 L6.4 0.9 H13 Q14 0.9 14 1.9 V12 Q14 13 13 13 H1 Q0 13 0 12 Z" fill="#1690dc"/>
<path d="M0 3.4 Q0 2.5 0.9 2.5 H13.1 Q14 2.5 14 3.4 V12 Q14 13 13 13 H1 Q0 13 0 12 Z" fill="url(#sfg)"/>
</svg>
<div class="a rt" style="left:253px;top:330px;color:#e2e2e2">ca.lproj</div>
<div class="a rt" style="left:499px;top:330px;color:#bdbdbd">Today at 13:08</div>
<div class="a" style="left:751px;top:337px;width:5px;height:2px;background:rgba(190,190,190,0.72)"></div><div class="a" style="left:757px;top:337px;width:5px;height:2px;background:rgba(190,190,190,0.72)"></div>
<div class="row ev" style="top:349px"></div>
<svg class="ic" style="left:222px;top:354px" width="7" height="10" viewBox="0 0 7 10"><path d="M1.6 1.4 L5.3 5 L1.6 8.6" fill="none" stroke="#a8a8a8" stroke-width="1.15" stroke-linecap="round" stroke-linejoin="round"/></svg>
<svg class="ic" style="left:232px;top:353px" width="16" height="16" viewBox="-1 -1 16 16">
<path d="M0 1 Q0 0 1 0 H5 Q5.6 0 6 0.5 L6.4 0.9 H13 Q14 0.9 14 1.9 V12 Q14 13 13 13 H1 Q0 13 0 12 Z" fill="none" stroke="#000" stroke-opacity="0.35" stroke-width="1.2"/>
<path d="M0 1 Q0 0 1 0 H5 Q5.6 0 6 0.5 L6.4 0.9 H13 Q14 0.9 14 1.9 V12 Q14 13 13 13 H1 Q0 13 0 12 Z" fill="#1690dc"/>
<path d="M0 3.4 Q0 2.5 0.9 2.5 H13.1 Q14 2.5 14 3.4 V12 Q14 13 13 13 H1 Q0 13 0 12 Z" fill="url(#sfg)"/>
</svg>
<div class="a rt" style="left:253px;top:352px;color:#e2e2e2">cs.lproj</div>
<div class="a rt" style="left:499px;top:352px;color:#bdbdbd">Today at 13:08</div>
<div class="a" style="left:751px;top:359px;width:5px;height:2px;background:rgba(190,190,190,0.72)"></div><div class="a" style="left:757px;top:359px;width:5px;height:2px;background:rgba(190,190,190,0.72)"></div>
<div class="row od" style="top:371px"></div>
<svg class="ic" style="left:222px;top:376px" width="7" height="10" viewBox="0 0 7 10"><path d="M1.6 1.4 L5.3 5 L1.6 8.6" fill="none" stroke="#a8a8a8" stroke-width="1.15" stroke-linecap="round" stroke-linejoin="round"/></svg>
<svg class="ic" style="left:232px;top:375px" width="16" height="16" viewBox="-1 -1 16 16">
<path d="M0 1 Q0 0 1 0 H5 Q5.6 0 6 0.5 L6.4 0.9 H13 Q14 0.9 14 1.9 V12 Q14 13 13 13 H1 Q0 13 0 12 Z" fill="none" stroke="#000" stroke-opacity="0.35" stroke-width="1.2"/>
<path d="M0 1 Q0 0 1 0 H5 Q5.6 0 6 0.5 L6.4 0.9 H13 Q14 0.9 14 1.9 V12 Q14 13 13 13 H1 Q0 13 0 12 Z" fill="#1690dc"/>
<path d="M0 3.4 Q0 2.5 0.9 2.5 H13.1 Q14 2.5 14 3.4 V12 Q14 13 13 13 H1 Q0 13 0 12 Z" fill="url(#sfg)"/>
</svg>
<div class="a rt" style="left:253px;top:374px;color:#e2e2e2">da.lproj</div>
<div class="a rt" style="left:499px;top:374px;color:#bdbdbd">Today at 13:08</div>
<div class="a" style="left:751px;top:381px;width:5px;height:2px;background:rgba(190,190,190,0.72)"></div><div class="a" style="left:757px;top:381px;width:5px;height:2px;background:rgba(190,190,190,0.72)"></div>
<div class="row ev" style="top:393px"></div>
<svg class="ic" style="left:222px;top:398px" width="7" height="10" viewBox="0 0 7 10"><path d="M1.6 1.4 L5.3 5 L1.6 8.6" fill="none" stroke="#a8a8a8" stroke-width="1.15" stroke-linecap="round" stroke-linejoin="round"/></svg>
<svg class="ic" style="left:232px;top:397px" width="16" height="16" viewBox="-1 -1 16 16">
<path d="M0 1 Q0 0 1 0 H5 Q5.6 0 6 0.5 L6.4 0.9 H13 Q14 0.9 14 1.9 V12 Q14 13 13 13 H1 Q0 13 0 12 Z" fill="none" stroke="#000" stroke-opacity="0.35" stroke-width="1.2"/>
<path d="M0 1 Q0 0 1 0 H5 Q5.6 0 6 0.5 L6.4 0.9 H13 Q14 0.9 14 1.9 V12 Q14 13 13 13 H1 Q0 13 0 12 Z" fill="#1690dc"/>
<path d="M0 3.4 Q0 2.5 0.9 2.5 H13.1 Q14 2.5 14 3.4 V12 Q14 13 13 13 H1 Q0 13 0 12 Z" fill="url(#sfg)"/>
</svg>
<div class="a rt" style="left:253px;top:396px;color:#e2e2e2">de.lproj</div>
<div class="a rt" style="left:499px;top:396px;color:#bdbdbd">Today at 13:08</div>
<div class="a" style="left:751px;top:403px;width:5px;height:2px;background:rgba(190,190,190,0.72)"></div><div class="a" style="left:757px;top:403px;width:5px;height:2px;background:rgba(190,190,190,0.72)"></div>
<div class="row od" style="top:415px"></div>
<svg class="ic" style="left:222px;top:420px" width="7" height="10" viewBox="0 0 7 10"><path d="M1.6 1.4 L5.3 5 L1.6 8.6" fill="none" stroke="#a8a8a8" stroke-width="1.15" stroke-linecap="round" stroke-linejoin="round"/></svg>
<svg class="ic" style="left:232px;top:419px" width="16" height="16" viewBox="-1 -1 16 16">
<path d="M0 1 Q0 0 1 0 H5 Q5.6 0 6 0.5 L6.4 0.9 H13 Q14 0.9 14 1.9 V12 Q14 13 13 13 H1 Q0 13 0 12 Z" fill="none" stroke="#000" stroke-opacity="0.35" stroke-width="1.2"/>
<path d="M0 1 Q0 0 1 0 H5 Q5.6 0 6 0.5 L6.4 0.9 H13 Q14 0.9 14 1.9 V12 Q14 13 13 13 H1 Q0 13 0 12 Z" fill="#1690dc"/>
<path d="M0 3.4 Q0 2.5 0.9 2.5 H13.1 Q14 2.5 14 3.4 V12 Q14 13 13 13 H1 Q0 13 0 12 Z" fill="url(#sfg)"/>
</svg>
<div class="a rt" style="left:253px;top:418px;color:#e2e2e2">el.lproj</div>
<div class="a rt" style="left:499px;top:418px;color:#bdbdbd">Today at 13:08</div>
<div class="a" style="left:751px;top:425px;width:5px;height:2px;background:rgba(190,190,190,0.72)"></div><div class="a" style="left:757px;top:425px;width:5px;height:2px;background:rgba(190,190,190,0.72)"></div>
<div class="row ev" style="top:437px"></div>
<svg class="ic" style="left:222px;top:442px" width="7" height="10" viewBox="0 0 7 10"><path d="M1.6 1.4 L5.3 5 L1.6 8.6" fill="none" stroke="#a8a8a8" stroke-width="1.15" stroke-linecap="round" stroke-linejoin="round"/></svg>
<svg class="ic" style="left:232px;top:441px" width="16" height="16" viewBox="-1 -1 16 16">
<path d="M0 1 Q0 0 1 0 H5 Q5.6 0 6 0.5 L6.4 0.9 H13 Q14 0.9 14 1.9 V12 Q14 13 13 13 H1 Q0 13 0 12 Z" fill="none" stroke="#000" stroke-opacity="0.35" stroke-width="1.2"/>
<path d="M0 1 Q0 0 1 0 H5 Q5.6 0 6 0.5 L6.4 0.9 H13 Q14 0.9 14 1.9 V12 Q14 13 13 13 H1 Q0 13 0 12 Z" fill="#1690dc"/>
<path d="M0 3.4 Q0 2.5 0.9 2.5 H13.1 Q14 2.5 14 3.4 V12 Q14 13 13 13 H1 Q0 13 0 12 Z" fill="url(#sfg)"/>
</svg>
<div class="a rt" style="left:253px;top:440px;color:#e2e2e2">en_GB.lproj</div>
<div class="a rt" style="left:499px;top:440px;color:#bdbdbd">Today at 13:08</div>
<div class="a" style="left:751px;top:447px;width:5px;height:2px;background:rgba(190,190,190,0.72)"></div><div class="a" style="left:757px;top:447px;width:5px;height:2px;background:rgba(190,190,190,0.72)"></div>
<div class="row od" style="top:459px"></div>
<svg class="ic" style="left:222px;top:464px" width="7" height="10" viewBox="0 0 7 10"><path d="M1.6 1.4 L5.3 5 L1.6 8.6" fill="none" stroke="#a8a8a8" stroke-width="1.15" stroke-linecap="round" stroke-linejoin="round"/></svg>
<svg class="ic" style="left:232px;top:463px" width="16" height="16" viewBox="-1 -1 16 16">
<path d="M0 1 Q0 0 1 0 H5 Q5.6 0 6 0.5 L6.4 0.9 H13 Q14 0.9 14 1.9 V12 Q14 13 13 13 H1 Q0 13 0 12 Z" fill="none" stroke="#000" stroke-opacity="0.35" stroke-width="1.2"/>
<path d="M0 1 Q0 0 1 0 H5 Q5.6 0 6 0.5 L6.4 0.9 H13 Q14 0.9 14 1.9 V12 Q14 13 13 13 H1 Q0 13 0 12 Z" fill="#1690dc"/>
<path d="M0 3.4 Q0 2.5 0.9 2.5 H13.1 Q14 2.5 14 3.4 V12 Q14 13 13 13 H1 Q0 13 0 12 Z" fill="url(#sfg)"/>
</svg>
<div class="a rt" style="left:253px;top:462px;color:#e2e2e2">en_XA.lproj</div>
<div class="a rt" style="left:499px;top:462px;color:#bdbdbd">Today at 13:08</div>
<div class="a" style="left:751px;top:469px;width:5px;height:2px;background:rgba(190,190,190,0.72)"></div><div class="a" style="left:757px;top:469px;width:5px;height:2px;background:rgba(190,190,190,0.72)"></div>
<div class="row ev" style="top:481px"></div>
<svg class="ic" style="left:222px;top:486px" width="7" height="10" viewBox="0 0 7 10"><path d="M1.6 1.4 L5.3 5 L1.6 8.6" fill="none" stroke="#a8a8a8" stroke-width="1.15" stroke-linecap="round" stroke-linejoin="round"/></svg>
<svg class="ic" style="left:232px;top:485px" width="16" height="16" viewBox="-1 -1 16 16">
<path d="M0 1 Q0 0 1 0 H5 Q5.6 0 6 0.5 L6.4 0.9 H13 Q14 0.9 14 1.9 V12 Q14 13 13 13 H1 Q0 13 0 12 Z" fill="none" stroke="#000" stroke-opacity="0.35" stroke-width="1.2"/>
<path d="M0 1 Q0 0 1 0 H5 Q5.6 0 6 0.5 L6.4 0.9 H13 Q14 0.9 14 1.9 V12 Q14 13 13 13 H1 Q0 13 0 12 Z" fill="#1690dc"/>
<path d="M0 3.4 Q0 2.5 0.9 2.5 H13.1 Q14 2.5 14 3.4 V12 Q14 13 13 13 H1 Q0 13 0 12 Z" fill="url(#sfg)"/>
</svg>
<div class="a rt" style="left:253px;top:484px;color:#e2e2e2">en.lproj</div>
<div class="a rt" style="left:499px;top:484px;color:#bdbdbd">Today at 13:08</div>
<div class="a" style="left:751px;top:491px;width:5px;height:2px;background:rgba(190,190,190,0.72)"></div><div class="a" style="left:757px;top:491px;width:5px;height:2px;background:rgba(190,190,190,0.72)"></div>
<div class="row od" style="top:503px"></div>
<svg class="ic" style="left:222px;top:508px" width="7" height="10" viewBox="0 0 7 10"><path d="M1.6 1.4 L5.3 5 L1.6 8.6" fill="none" stroke="#a8a8a8" stroke-width="1.15" stroke-linecap="round" stroke-linejoin="round"/></svg>
<svg class="ic" style="left:232px;top:507px" width="16" height="16" viewBox="-1 -1 16 16">
<path d="M0 1 Q0 0 1 0 H5 Q5.6 0 6 0.5 L6.4 0.9 H13 Q14 0.9 14 1.9 V12 Q14 13 13 13 H1 Q0 13 0 12 Z" fill="none" stroke="#000" stroke-opacity="0.35" stroke-width="1.2"/>
<path d="M0 1 Q0 0 1 0 H5 Q5.6 0 6 0.5 L6.4 0.9 H13 Q14 0.9 14 1.9 V12 Q14 13 13 13 H1 Q0 13 0 12 Z" fill="#1690dc"/>
<path d="M0 3.4 Q0 2.5 0.9 2.5 H13.1 Q14 2.5 14 3.4 V12 Q14 13 13 13 H1 Q0 13 0 12 Z" fill="url(#sfg)"/>
</svg>
<div class="a rt" style="left:253px;top:506px;color:#e2e2e2">es_419.lproj</div>
<div class="a rt" style="left:499px;top:506px;color:#bdbdbd">Today at 13:08</div>
<div class="a" style="left:751px;top:513px;width:5px;height:2px;background:rgba(190,190,190,0.72)"></div><div class="a" style="left:757px;top:513px;width:5px;height:2px;background:rgba(190,190,190,0.72)"></div>
<div class="row ev" style="top:525px"></div>
<svg class="ic" style="left:222px;top:530px" width="7" height="10" viewBox="0 0 7 10"><path d="M1.6 1.4 L5.3 5 L1.6 8.6" fill="none" stroke="#a8a8a8" stroke-width="1.15" stroke-linecap="round" stroke-linejoin="round"/></svg>
<svg class="ic" style="left:232px;top:529px" width="16" height="16" viewBox="-1 -1 16 16">
<path d="M0 1 Q0 0 1 0 H5 Q5.6 0 6 0.5 L6.4 0.9 H13 Q14 0.9 14 1.9 V12 Q14 13 13 13 H1 Q0 13 0 12 Z" fill="none" stroke="#000" stroke-opacity="0.35" stroke-width="1.2"/>
<path d="M0 1 Q0 0 1 0 H5 Q5.6 0 6 0.5 L6.4 0.9 H13 Q14 0.9 14 1.9 V12 Q14 13 13 13 H1 Q0 13 0 12 Z" fill="#1690dc"/>
<path d="M0 3.4 Q0 2.5 0.9 2.5 H13.1 Q14 2.5 14 3.4 V12 Q14 13 13 13 H1 Q0 13 0 12 Z" fill="url(#sfg)"/>
</svg>
<div class="a rt" style="left:253px;top:528px;color:#e2e2e2">es.lproj</div>
<div class="a rt" style="left:499px;top:528px;color:#bdbdbd">Today at 13:08</div>
<div class="a" style="left:751px;top:535px;width:5px;height:2px;background:rgba(190,190,190,0.72)"></div><div class="a" style="left:757px;top:535px;width:5px;height:2px;background:rgba(190,190,190,0.72)"></div>
<div class="row od" style="top:547px"></div>
<svg class="ic" style="left:222px;top:552px" width="7" height="10" viewBox="0 0 7 10"><path d="M1.6 1.4 L5.3 5 L1.6 8.6" fill="none" stroke="#a8a8a8" stroke-width="1.15" stroke-linecap="round" stroke-linejoin="round"/></svg>
<svg class="ic" style="left:232px;top:551px" width="16" height="16" viewBox="-1 -1 16 16">
<path d="M0 1 Q0 0 1 0 H5 Q5.6 0 6 0.5 L6.4 0.9 H13 Q14 0.9 14 1.9 V12 Q14 13 13 13 H1 Q0 13 0 12 Z" fill="none" stroke="#000" stroke-opacity="0.35" stroke-width="1.2"/>
<path d="M0 1 Q0 0 1 0 H5 Q5.6 0 6 0.5 L6.4 0.9 H13 Q14 0.9 14 1.9 V12 Q14 13 13 13 H1 Q0 13 0 12 Z" fill="#1690dc"/>
<path d="M0 3.4 Q0 2.5 0.9 2.5 H13.1 Q14 2.5 14 3.4 V12 Q14 13 13 13 H1 Q0 13 0 12 Z" fill="url(#sfg)"/>
</svg>
<div class="a rt" style="left:253px;top:550px;color:#e2e2e2">et.lproj</div>
<div class="a rt" style="left:499px;top:550px;color:#bdbdbd">Today at 13:08</div>
<div class="a" style="left:751px;top:557px;width:5px;height:2px;background:rgba(190,190,190,0.72)"></div><div class="a" style="left:757px;top:557px;width:5px;height:2px;background:rgba(190,190,190,0.72)"></div>
<div class="row ev" style="top:569px"></div>
<svg class="ic" style="left:222px;top:574px" width="7" height="10" viewBox="0 0 7 10"><path d="M1.6 1.4 L5.3 5 L1.6 8.6" fill="none" stroke="#a8a8a8" stroke-width="1.15" stroke-linecap="round" stroke-linejoin="round"/></svg>
<svg class="ic" style="left:232px;top:573px" width="16" height="16" viewBox="-1 -1 16 16">
<path d="M0 1 Q0 0 1 0 H5 Q5.6 0 6 0.5 L6.4 0.9 H13 Q14 0.9 14 1.9 V12 Q14 13 13 13 H1 Q0 13 0 12 Z" fill="none" stroke="#000" stroke-opacity="0.35" stroke-width="1.2"/>
<path d="M0 1 Q0 0 1 0 H5 Q5.6 0 6 0.5 L6.4 0.9 H13 Q14 0.9 14 1.9 V12 Q14 13 13 13 H1 Q0 13 0 12 Z" fill="#1690dc"/>
<path d="M0 3.4 Q0 2.5 0.9 2.5 H13.1 Q14 2.5 14 3.4 V12 Q14 13 13 13 H1 Q0 13 0 12 Z" fill="url(#sfg)"/>
</svg>
<div class="a rt" style="left:253px;top:572px;color:#e2e2e2">fa.lproj</div>
<div class="a rt" style="left:499px;top:572px;color:#bdbdbd">Today at 13:08</div>
<div class="a" style="left:751px;top:579px;width:5px;height:2px;background:rgba(190,190,190,0.72)"></div><div class="a" style="left:757px;top:579px;width:5px;height:2px;background:rgba(190,190,190,0.72)"></div>
<div class="row od" style="top:591px"></div>
<svg class="ic" style="left:222px;top:596px" width="7" height="10" viewBox="0 0 7 10"><path d="M1.6 1.4 L5.3 5 L1.6 8.6" fill="none" stroke="#a8a8a8" stroke-width="1.15" stroke-linecap="round" stroke-linejoin="round"/></svg>
<svg class="ic" style="left:232px;top:595px" width="16" height="16" viewBox="-1 -1 16 16">
<path d="M0 1 Q0 0 1 0 H5 Q5.6 0 6 0.5 L6.4 0.9 H13 Q14 0.9 14 1.9 V12 Q14 13 13 13 H1 Q0 13 0 12 Z" fill="none" stroke="#000" stroke-opacity="0.35" stroke-width="1.2"/>
<path d="M0 1 Q0 0 1 0 H5 Q5.6 0 6 0.5 L6.4 0.9 H13 Q14 0.9 14 1.9 V12 Q14 13 13 13 H1 Q0 13 0 12 Z" fill="#1690dc"/>
<path d="M0 3.4 Q0 2.5 0.9 2.5 H13.1 Q14 2.5 14 3.4 V12 Q14 13 13 13 H1 Q0 13 0 12 Z" fill="url(#sfg)"/>
</svg>
<div class="a rt" style="left:253px;top:594px;color:#e2e2e2">fi.lproj</div>
<div class="a rt" style="left:499px;top:594px;color:#bdbdbd">Today at 13:08</div>
<div class="a" style="left:751px;top:601px;width:5px;height:2px;background:rgba(190,190,190,0.72)"></div><div class="a" style="left:757px;top:601px;width:5px;height:2px;background:rgba(190,190,190,0.72)"></div>
<div class="row ev" style="top:613px"></div>
<svg class="ic" style="left:222px;top:618px" width="7" height="10" viewBox="0 0 7 10"><path d="M1.6 1.4 L5.3 5 L1.6 8.6" fill="none" stroke="#a8a8a8" stroke-width="1.15" stroke-linecap="round" stroke-linejoin="round"/></svg>
<svg class="ic" style="left:232px;top:617px" width="16" height="16" viewBox="-1 -1 16 16">
<path d="M0 1 Q0 0 1 0 H5 Q5.6 0 6 0.5 L6.4 0.9 H13 Q14 0.9 14 1.9 V12 Q14 13 13 13 H1 Q0 13 0 12 Z" fill="none" stroke="#000" stroke-opacity="0.35" stroke-width="1.2"/>
<path d="M0 1 Q0 0 1 0 H5 Q5.6 0 6 0.5 L6.4 0.9 H13 Q14 0.9 14 1.9 V12 Q14 13 13 13 H1 Q0 13 0 12 Z" fill="#1690dc"/>
<path d="M0 3.4 Q0 2.5 0.9 2.5 H13.1 Q14 2.5 14 3.4 V12 Q14 13 13 13 H1 Q0 13 0 12 Z" fill="url(#sfg)"/>
</svg>
<div class="a rt" style="left:253px;top:616px;color:#e2e2e2">fil.lproj</div>
<div class="a rt" style="left:499px;top:616px;color:#bdbdbd">Today at 13:08</div>
<div class="a" style="left:751px;top:623px;width:5px;height:2px;background:rgba(190,190,190,0.72)"></div><div class="a" style="left:757px;top:623px;width:5px;height:2px;background:rgba(190,190,190,0.72)"></div>
<div class="row od" style="top:635px"></div>
<svg class="ic" style="left:222px;top:640px" width="7" height="10" viewBox="0 0 7 10"><path d="M1.6 1.4 L5.3 5 L1.6 8.6" fill="none" stroke="#a8a8a8" stroke-width="1.15" stroke-linecap="round" stroke-linejoin="round"/></svg>
<svg class="ic" style="left:232px;top:639px" width="16" height="16" viewBox="-1 -1 16 16">
<path d="M0 1 Q0 0 1 0 H5 Q5.6 0 6 0.5 L6.4 0.9 H13 Q14 0.9 14 1.9 V12 Q14 13 13 13 H1 Q0 13 0 12 Z" fill="none" stroke="#000" stroke-opacity="0.35" stroke-width="1.2"/>
<path d="M0 1 Q0 0 1 0 H5 Q5.6 0 6 0.5 L6.4 0.9 H13 Q14 0.9 14 1.9 V12 Q14 13 13 13 H1 Q0 13 0 12 Z" fill="#1690dc"/>
<path d="M0 3.4 Q0 2.5 0.9 2.5 H13.1 Q14 2.5 14 3.4 V12 Q14 13 13 13 H1 Q0 13 0 12 Z" fill="url(#sfg)"/>
</svg>
<div class="a rt" style="left:253px;top:638px;color:#e2e2e2">fr.lproj</div>
<div class="a rt" style="left:499px;top:638px;color:#bdbdbd">Today at 13:08</div>
<div class="a" style="left:751px;top:645px;width:5px;height:2px;background:rgba(190,190,190,0.72)"></div><div class="a" style="left:757px;top:645px;width:5px;height:2px;background:rgba(190,190,190,0.72)"></div>
<div class="row ev" style="top:657px"></div>
<svg class="ic" style="left:222px;top:662px" width="7" height="10" viewBox="0 0 7 10"><path d="M1.6 1.4 L5.3 5 L1.6 8.6" fill="none" stroke="#a8a8a8" stroke-width="1.15" stroke-linecap="round" stroke-linejoin="round"/></svg>
<svg class="ic" style="left:232px;top:661px" width="16" height="16" viewBox="-1 -1 16 16">
<path d="M0 1 Q0 0 1 0 H5 Q5.6 0 6 0.5 L6.4 0.9 H13 Q14 0.9 14 1.9 V12 Q14 13 13 13 H1 Q0 13 0 12 Z" fill="none" stroke="#000" stroke-opacity="0.35" stroke-width="1.2"/>
<path d="M0 1 Q0 0 1 0 H5 Q5.6 0 6 0.5 L6.4 0.9 H13 Q14 0.9 14 1.9 V12 Q14 13 13 13 H1 Q0 13 0 12 Z" fill="#1690dc"/>
<path d="M0 3.4 Q0 2.5 0.9 2.5 H13.1 Q14 2.5 14 3.4 V12 Q14 13 13 13 H1 Q0 13 0 12 Z" fill="url(#sfg)"/>
</svg>
<div class="a rt" style="left:253px;top:660px;color:#e2e2e2">gu.lproj</div>
<div class="a rt" style="left:499px;top:660px;color:#bdbdbd">Today at 13:08</div>
<div class="a" style="left:751px;top:667px;width:5px;height:2px;background:rgba(190,190,190,0.72)"></div><div class="a" style="left:757px;top:667px;width:5px;height:2px;background:rgba(190,190,190,0.72)"></div>
<svg class="ic" style="left:0px;top:0px" width="175" height="560" viewBox="0 0 175 560"><g fill="none" stroke="#62ca5b" stroke-width="1.15" stroke-linecap="round" stroke-linejoin="round"><path d="M22.01 91.01 A6.6 6.6 0 1 1 29.59 91.01"/><path d="M23.28 89.20 A4.4 4.4 0 1 1 28.32 89.20"/><path d="M24.54 87.40 A2.2 2.2 0 1 1 27.06 87.40"/><circle cx="25.8" cy="85.6" r="0.7" fill="#62ca5b"/><circle cx="26.4" cy="113.2" r="6.2"/><path d="M26.4 109.3 V113.3 H23.3"/><g stroke-width="1.45"><path d="M26.3 136.4 L21.9 143.7"/><path d="M24.6 136.4 L30.9 147.2"/><path d="M19.3 144.3 H27.7"/><path d="M29.3 144.3 H32.4"/></g><circle cx="20.9" cy="147.1" r="0.9" fill="#62ca5b" stroke="none"/><rect x="19.4" y="163.6" width="14.2" height="11.2" rx="1.8"/><rect x="19.6" y="164.3" width="13.8" height="2.6" fill="#62ca5b" stroke="none" opacity="0.55"/><rect x="22" y="171" width="9.2" height="1.9" fill="#62ca5b" stroke="none"/><path d="M26.6 190.6 H22.4 Q21.3 190.6 21.3 191.7 V202.5 Q21.3 203.5 22.4 203.5 H30.4 Q31.5 203.5 31.5 202.5 V195.6 Z"/><path d="M26.6 190.6 V194.6 Q26.6 195.6 27.6 195.6 H31.5"/><circle cx="26.4" cy="225.2" r="6.2"/><path d="M26.4 221.8 V228.3 M23.9 225.9 L26.4 228.3 L28.9 225.9"/><path d="M18.4 252.6 L25.5 246.8 L32.6 252.6"/><path d="M20.6 250.8 V259.3 H30.8 V250.8"/><path d="M30.5 248.2 V250.6"/><rect x="24" y="254.2" width="3.6" height="5.2" fill="#62ca5b" stroke="none"/><path d="M22.7 276.2 L30.9 274.2 V276.8 L22.7 278.8 Z" fill="#62ca5b"/><path d="M23.3 276.5 V285.6 M30.4 274.6 V284.2"/><ellipse cx="21.7" cy="286.1" rx="1.9" ry="1.6" fill="#62ca5b" stroke="none"/><ellipse cx="28.9" cy="284.7" rx="1.9" ry="1.6" fill="#62ca5b" stroke="none"/><rect x="19.5" y="303.6" width="14" height="10.9" rx="2"/><circle cx="23.6" cy="307.6" r="1.3" fill="#62ca5b" stroke="none"/><path d="M19.6 312.2 L22.4 310.2 L24.6 311.4 L28.7 308.9 L33.4 312.2 V313.4 Q33.4 314.5 32.3 314.5 H20.7 Q19.6 314.5 19.6 313.4 Z" fill="#62ca5b" stroke="none"/><rect x="19.5" y="331.6" width="14" height="10.8" rx="1.6"/><path d="M21.9 331.6 V342.4 M31.1 331.6 V342.4 M21.9 337 H31.1"/><path d="M20.7 333.5 V333.6 M20.7 335.6 V335.7 M20.7 337.7 V337.8 M20.7 339.8 V339.9 M20.7 341.2 V341.3 M32.3 333.5 V333.6 M32.3 335.6 V335.7 M32.3 337.7 V337.8 M32.3 339.8 V339.9 M32.3 341.2 V341.3" stroke-width="0.9"/><path d="M19.5 361.0 Q19.5 359.6 20.9 359.6 H23 Q23.8 359.6 24.3 360.20000000000005 L24.9 360.8 H32 Q33.4 360.8 33.4 362.20000000000005 V369.6 Q33.4 370.8 32.2 370.8 H20.7 Q19.5 370.8 19.5 369.6 Z"/><path d="M19.5 363.40000000000003 H33.4"/><path d="M19.5 389.0 Q19.5 387.6 20.9 387.6 H23 Q23.8 387.6 24.3 388.20000000000005 L24.9 388.8 H32 Q33.4 388.8 33.4 390.20000000000005 V397.6 Q33.4 398.8 32.2 398.8 H20.7 Q19.5 398.8 19.5 397.6 Z"/><path d="M19.5 391.40000000000003 H33.4"/><path d="M19.5 417.0 Q19.5 415.6 20.9 415.6 H23 Q23.8 415.6 24.3 416.20000000000005 L24.9 416.8 H32 Q33.4 416.8 33.4 418.20000000000005 V425.6 Q33.4 426.8 32.2 426.8 H20.7 Q19.5 426.8 19.5 425.6 Z"/><path d="M19.5 419.40000000000003 H33.4"/></g></svg>
<svg class="ic" style="left:0px;top:0px" width="175" height="560" viewBox="0 0 175 560"><g fill="none" stroke="#9c9c9c" stroke-width="1.15" stroke-linecap="round" stroke-linejoin="round"><path d="M18.4 485.8 V478.4 Q18.4 477.4 19.4 477.4 H30.6 Q31.6 477.4 31.6 478.4 V485.8"/><path d="M16.2 486.2 H33.8"/><path d="M19.4 509.6 L21.6 505.5 Q22 504.6 23 504.6 H30 Q31 504.6 31.4 505.5 L33.6 509.6"/><rect x="19.4" y="509.6" width="14.2" height="5.6" rx="2"/><path d="M24.6 512.4 H25.4 M26.8 512.4 H27.6 M29 512.4 H29.8" stroke-width="1"/><path d="M19.4 537.6 L21.6 533.5 Q22 532.6 23 532.6 H30 Q31 532.6 31.4 533.5 L33.6 537.6"/><rect x="19.4" y="537.6" width="14.2" height="5.6" rx="2"/><circle cx="30.6" cy="540.4" r="0.7" fill="#9c9c9c" stroke="none"/></g></svg>
<svg class="ic" style="left:144px;top:531px" width="12" height="12" viewBox="0 0 12 12"><path d="M5.5 1.7 L10.1 6.8 H0.9 Z" fill="#8e8e8e" stroke="#8e8e8e" stroke-width="0.5" stroke-linejoin="round"/><rect x="0.9" y="7.8" width="9.2" height="3" rx="0.5" fill="#8e8e8e"/></svg>

<div style="position:absolute;left:0;top:0;width:1218px;height:753px;border-radius:10px;box-shadow:inset 0 1px 0 rgba(255,255,255,0.135);pointer-events:none"></div>
</div>
</body></html>
